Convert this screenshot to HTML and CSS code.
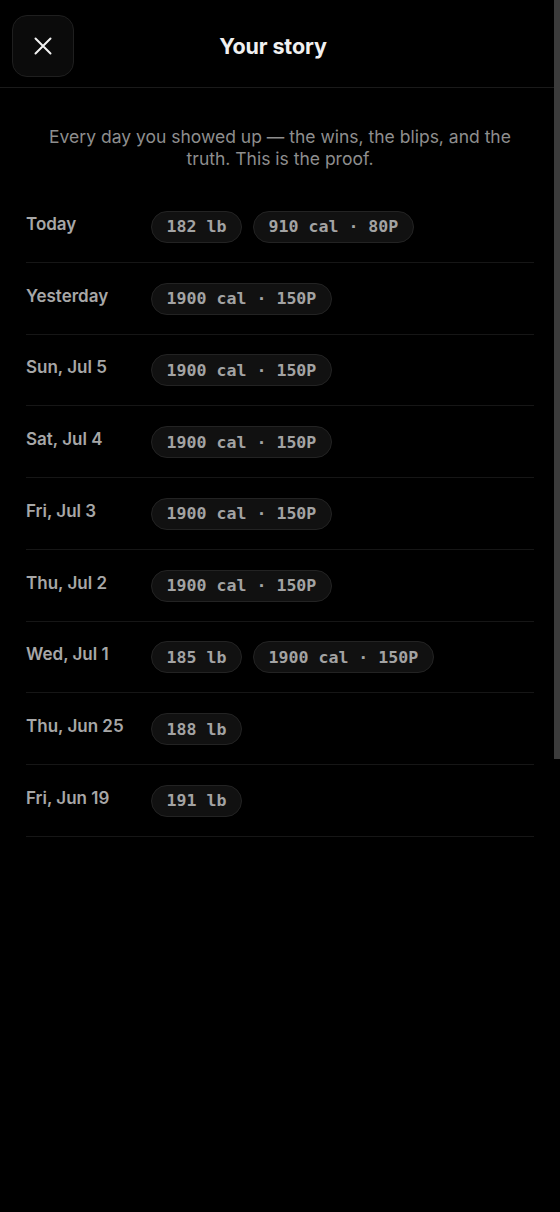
FILE: index.html
```html
<!DOCTYPE html>
<html lang="en">
<head>
<meta charset="utf-8">
<title>Your story</title>
<link rel="stylesheet" href="styles.css">
</head>
<body>
<div class="page">
  <header class="topbar">
    <button class="close" aria-label="Close">
      <svg width="18" height="18" viewBox="0 0 18 18" fill="none" stroke="#f2f2f2" stroke-width="2" stroke-linecap="round"><path d="M1.5 1.5 L16.5 16.5 M16.5 1.5 L1.5 16.5"/></svg>
    </button>
    <h1 class="title">Your story</h1>
    <div class="spacer"></div>
  </header>
  <main class="content">
    <p class="intro">Every day you showed up — the wins, the blips, and the truth. This is the proof.</p>
    <ul class="days">
      <li class="day"><span class="label">Today</span><div class="pills"><span class="pill">182 lb</span><span class="pill">910 cal · 80P</span></div></li>
      <li class="day"><span class="label">Yesterday</span><div class="pills"><span class="pill">1900 cal · 150P</span></div></li>
      <li class="day"><span class="label">Sun, Jul 5</span><div class="pills"><span class="pill">1900 cal · 150P</span></div></li>
      <li class="day"><span class="label">Sat, Jul 4</span><div class="pills"><span class="pill">1900 cal · 150P</span></div></li>
      <li class="day"><span class="label">Fri, Jul 3</span><div class="pills"><span class="pill">1900 cal · 150P</span></div></li>
      <li class="day"><span class="label">Thu, Jul 2</span><div class="pills"><span class="pill">1900 cal · 150P</span></div></li>
      <li class="day"><span class="label">Wed, Jul 1</span><div class="pills"><span class="pill">185 lb</span><span class="pill">1900 cal · 150P</span></div></li>
      <li class="day"><span class="label">Thu, Jun 25</span><div class="pills"><span class="pill">188 lb</span></div></li>
      <li class="day"><span class="label">Fri, Jun 19</span><div class="pills"><span class="pill">191 lb</span></div></li>
    </ul>
  </main>
</div>
<div class="scroll-thumb" aria-hidden="true"></div>
</body>
</html>
```
FILE: styles.css
```css
html {
  background: #000;
}
body {
  margin: 0;
  background: #000;
  font-family: Inter, "Noto Sans", sans-serif;
  color: #f2f2f2;
}
.page {
  margin-right: 6px;
}
.scroll-thumb {
  position: fixed;
  top: 0;
  right: 0;
  width: 6px;
  height: 759px;
  background: #3b3b3b;
}
.topbar {
  display: flex;
  align-items: center;
  padding: 15px 12px 10px;
  border-bottom: 1px solid #1a1a1a;
}
.close {
  width: 62px;
  height: 62px;
  flex: none;
  display: flex;
  align-items: center;
  justify-content: center;
  background: #0b0b0b;
  border: 1px solid #1f1f1f;
  border-radius: 15px;
  padding: 0;
  margin: 0;
}
.title {
  flex: 1;
  margin: 0;
  text-align: center;
  font-size: 21.5px;
  font-weight: 700;
  color: #f0f0f0;
  letter-spacing: -0.1px;
}
.spacer {
  width: 70px;
  flex: none;
}
.content {
  padding: 38px 20px 0 26px;
}
.intro {
  margin: 0 0 21px;
  text-align: center;
  font-size: 17.5px;
  line-height: 22px;
  color: #8e8e8e;
  padding: 0 8px;
}
.days {
  list-style: none;
  margin: 0;
  padding: 0;
}
.day {
  display: flex;
  align-items: flex-start;
  padding: 19.75px 0 19px;
  border-bottom: 1px solid #161616;
}
.label {
  width: 125px;
  flex: none;
  font-size: 17px;
  line-height: 26px;
  font-weight: 600;
  color: #a7a7a7;
}
.pills {
  display: flex;
  gap: 11px;
}
.pill {
  height: 30px;
  display: flex;
  align-items: center;
  padding: 0 14.5px;
  border: 1px solid #232323;
  border-radius: 16px;
  background: #111;
  font-family: "DejaVu Sans Mono", "Liberation Mono", monospace;
  font-weight: 700;
  font-size: 16.6px;
  color: #a3a3a3;
  white-space: nowrap;
}
```
